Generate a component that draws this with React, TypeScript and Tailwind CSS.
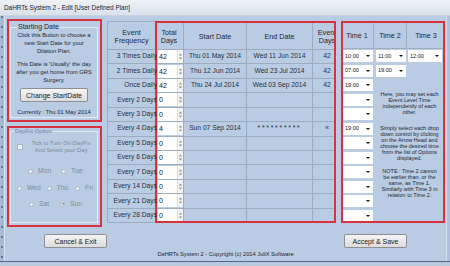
import React from 'react';

type Row = { freq: string; days: string; start?: string; end?: string; ev?: string };

const rows: Row[] = [
  { freq: '3 Times Daily', days: '42', start: 'Thu 01 May 2014', end: 'Wed 11 Jun 2014', ev: '42' },
  { freq: '2 Times Daily', days: '42', start: 'Thu 12 Jun 2014', end: 'Wed 23 Jul 2014', ev: '42' },
  { freq: 'Once Daily', days: '42', start: 'Thu 24 Jul 2014', end: 'Wed 03 Sep 2014', ev: '42' },
  { freq: 'Every 2 Days', days: '0' },
  { freq: 'Every 3 Days', days: '0' },
  { freq: 'Every 4 Days', days: '4', start: 'Sun 07 Sep 2014', end: '**********', ev: '«' },
  { freq: 'Every 5 Days', days: '0' },
  { freq: 'Every 6 Days', days: '0' },
  { freq: 'Every 7 Days', days: '0' },
  { freq: 'Every 14 Days', days: '0' },
  { freq: 'Every 21 Days', days: '0' },
  { freq: 'Every 28 Days', days: '0' },
];

const time1 = ['10:00', '07:00', '19:00', '', '', '19:00', '', '', '', '', '', ''];

function SpinBox({ value }: { value: string }) {
  return (
    <div className="flex h-[13px] w-[25px] items-center bg-white">
      <span className="flex-1 pl-[1px] text-[7px] leading-none text-[#111]">{value}</span>
      <div className="flex h-full w-[6px] items-center justify-center border-l border-[#d6dade] bg-[#f4f4f4]">
        <svg width="5" height="9" viewBox="0 0 5 9">
          <path d="M2.5 1.5L4 3.5H1z" fill="#8a8a8a" />
          <path d="M1 5.5h3L2.5 7.5z" fill="#8a8a8a" />
        </svg>
      </div>
    </div>
  );
}

function Combo({ value, w }: { value: string; w: string }) {
  return (
    <div className={`flex h-[12px] items-center justify-between bg-white pl-[2px] pr-[3px] ${w}`}>
      <span className="text-[5.5px] leading-none text-[#111]">{value}</span>
      <svg width="4" height="2" viewBox="0 0 4 2">
        <path d="M0 0h4L2 2z" fill="#111" />
      </svg>
    </div>
  );
}

function Radio({ label, w, selected }: { label: string; w: string; selected?: boolean }) {
  return (
    <div className={`flex items-center gap-[5px] ${w}`}>
      <span className="flex h-[5px] w-[5px] shrink-0 items-center justify-center rounded-full border border-[#a9b5c4] bg-[#eef2f6]">
        {selected && <span className="h-[2px] w-[2px] rounded-full bg-[#8794a6]" />}
      </span>
      <span className="text-[6.8px] leading-[8px] text-[#7e8c9e]">{label}</span>
    </div>
  );
}

export default function App() {
  return (
    <div className="flex h-[266px] w-[450px] flex-col overflow-hidden bg-[#b4c6dd] font-['Liberation_Sans',Arial,sans-serif] text-[#1d2633]">
      {/* title bar */}
      <div className="flex h-[16px] items-center border-b border-[#c9d3de] bg-linear-to-b from-[#eef2f6] to-[#d9e1ea] pl-[4px] text-[6.4px] text-[#1b2230]">
        DaHRTs System 2 - Edit [User Defined Plan]
      </div>

      <div className="flex h-[245px]">
        <div className="flex w-[5px] justify-center border-r border-[#dce5ef] bg-[#a8bbd4]">
          <div className="w-[2px] bg-[repeating-linear-gradient(to_bottom,#5f7699_0px,#5f7699_2px,transparent_2px,transparent_10px)]" />
        </div>

        <div className="flex w-[441px] flex-col bg-[#bacce3] pt-[3px]">
          <div className="flex items-start">
            {/* left column */}
            <div className="ml-[2px] flex w-[95px] flex-col gap-[4px]">
              <div className="flex h-[103px] flex-col border-2 border-[#d8323f] pb-[2px]">
                <fieldset className="ml-[1px] mt-[2px] w-[88px] flex-1 border border-[#e3eaf3]">
                  <legend className="ml-[6px] px-[1px] text-[7px] leading-[8px] text-[#1d2633]">Starting Date</legend>
                  <div className="flex flex-col items-center text-center text-[5.8px] leading-[8px]">
                    <p>
                      Click this Button to choose a<br />new Start Date for your<br />Dilation Plan.
                    </p>
                    <p className="mt-[5px]">
                      This Date is 'Usually' the day<br />after you get home from GRS<br />Surgery.
                    </p>
                    <button className="mt-[4px] h-[14px] w-[68px] rounded-[2px] border border-[#8c8f93] bg-linear-to-b from-[#f5f5f5] to-[#dcdcdc] text-[7px] leading-none text-[#1a1a1a]">
                      Change StartDate
                    </button>
                    <p className="mt-[6px]">Currently : Thu 01 May 2014</p>
                  </div>
                </fieldset>
              </div>

              <div className="flex h-[101px] flex-col border-2 border-[#d8323f] pb-[2px]">
                <fieldset className="ml-[1px] w-[88px] flex-1 border border-[#e3eaf3]">
                  <legend className="ml-[3px] px-[1px] text-[5.8px] leading-[7px] text-[#7a889a]">DayFix Option</legend>
                  <div className="mt-[5px] flex h-[14px] items-center">
                    <span className="ml-[6px] h-[6px] w-[6px] border border-[#aab5c3] bg-[#eef2f6]" />
                    <span className="ml-[8px] w-[60px] text-center text-[5.8px] leading-[7px] text-[#7a889a]">
                      Tick to Turn On DayFix<br />And Select your Day
                    </span>
                  </div>
                  <div className="ml-[17px] mt-[13px] flex h-[8px]">
                    <Radio label="Mon" w="w-[33px]" />
                    <Radio label="Tue" w="w-[24px]" />
                  </div>
                  <div className="ml-[6px] mt-[9px] flex h-[8px]">
                    <Radio label="Wed" w="w-[29.5px]" />
                    <Radio label="Thu" w="w-[28.5px]" />
                    <Radio label="Fri" w="w-[18px]" />
                  </div>
                  <div className="ml-[18px] mt-[8px] flex h-[8px]">
                    <Radio label="Sat" w="w-[31px]" />
                    <Radio label="Sun" w="w-[24px]" selected />
                  </div>
                </fieldset>
              </div>
            </div>

            {/* data grid */}
            <div className="ml-[5px] mt-[2px] flex">
              <div className="grid h-[202px] w-[48px] grid-rows-[28px_repeat(12,minmax(0,1fr))] border-l border-t border-[#9dadc1]">
                <div className="flex items-center justify-center border-b border-[#9dadc1] pt-[3px] text-center text-[7.2px] leading-[8.5px]">
                  Event<br />Frequency
                </div>
                {rows.map((r) => (
                  <div key={r.freq} className="flex items-center justify-end whitespace-nowrap border-b border-[#9dadc1] text-[6.7px] leading-none text-[#263040]">
                    <span className="translate-x-[2px]">{r.freq}</span>
                  </div>
                ))}
              </div>

              <div className="grid h-[202px] w-[181px] grid-cols-[29px_63px_66px_23px] grid-rows-[28px_repeat(12,minmax(0,1fr))] border-t border-[#9dadc1] outline-2 -outline-offset-2 outline-[#d8323f]">
                <div className="flex items-center justify-center border-b border-r border-[#9dadc1] pt-[3px] text-center text-[7.2px] leading-[8.5px]">
                  Total<br />Days
                </div>
                <div className="flex items-center justify-center border-b border-r border-[#9dadc1] pt-[3px] text-[7.2px]">Start Date</div>
                <div className="flex items-center justify-center border-b border-r border-[#9dadc1] pt-[3px] text-[7.2px]">End Date</div>
                <div className="flex items-center overflow-hidden border-b border-[#9dadc1] pt-[3px]">
                  <div className="w-[28px] shrink-0 text-center text-[7.2px] leading-[8.5px]">
                    Event<br />Days
                  </div>
                </div>
                {rows.map((r) => (
                  <React.Fragment key={r.freq}>
                    <div className="flex items-center border-b border-r border-[#9dadc1] bg-[#bacce3] pl-[3px]">
                      <SpinBox value={r.days} />
                    </div>
                    <div className="flex items-center justify-center border-b border-r border-[#9dadc1] text-[6.7px] leading-none text-[#263040]">
                      {r.start}
                    </div>
                    <div className="flex items-center justify-center border-b border-r border-[#9dadc1] text-[6.7px] leading-none tracking-[0.6px] text-[#263040]">
                      {r.end === '**********' ? <span className="tracking-[1.8px]">{r.end}</span> : <span className="tracking-normal">{r.end}</span>}
                    </div>
                    <div className="flex items-center overflow-hidden border-b border-[#9dadc1]">
                      <div className="w-[28px] shrink-0 text-center text-[6.7px] leading-none text-[#263040]">{r.ev}</div>
                    </div>
                  </React.Fragment>
                ))}
              </div>
            </div>

            {/* time panel */}
            <div className="ml-[5px] mt-[2px] flex h-[202px] w-[104px] flex-col outline-2 -outline-offset-2 outline-[#d8323f]">
              <div className="flex h-[28px] border-b border-t border-[#9dadc1]">
                <div className="flex w-[33px] items-center justify-center border-r border-[#9dadc1] pt-[3px] text-[7.2px]">Time 1</div>
                <div className="flex w-[33px] items-center justify-center border-r border-[#9dadc1] pt-[3px] text-[7.2px]">Time 2</div>
                <div className="flex w-[38px] items-center justify-center pt-[3px] text-[7.2px]">Time 3</div>
              </div>
              <div className="flex flex-1">
                <div className="flex w-[33px] flex-col">
                  {time1.map((t, i) => (
                    <div key={i} className="flex h-[14.5px] items-center pl-[2px]">
                      <Combo value={t} w="w-[30px]" />
                    </div>
                  ))}
                </div>
                <div className="flex w-[71px] flex-col">
                  <div className="flex h-[14.5px] items-center">
                    <div className="w-[33px] pl-[2px]">
                      <Combo value="11:00" w="w-[30px]" />
                    </div>
                    <div className="pl-[1px]">
                      <Combo value="12:00" w="w-[34px]" />
                    </div>
                  </div>
                  <div className="flex h-[14.5px] items-center pl-[2px]">
                    <Combo value="19:00" w="w-[30px]" />
                  </div>
                  <div className="pt-[13px] text-center text-[5.5px] leading-[6px] text-[#1d2633]">
                    <p>
                      Here, you may set each<br />Event Level Time<br />independently of each<br />other.
                    </p>
                    <p className="mt-[10px]">
                      Simply select each drop<br />down control by clicking<br />on the Arrow Head and<br />choose the desired time<br />from the list of Options<br />displayed.
                    </p>
                    <p className="mt-[7px]">
                      NOTE : Time 2 cannot<br />be earlier than, or the<br />same, as Time 1.<br />Similarly with Time 3 in<br />relation to Time 2.
                    </p>
                  </div>
                </div>
              </div>
            </div>
          </div>

          {/* buttons */}
          <div className="mt-[7px] flex h-[14px] px-[39px]">
            <button className="h-[14px] w-[63px] rounded-[2px] border border-[#8c8f93] bg-linear-to-b from-[#f5f5f5] to-[#dcdcdc] text-[7px] leading-none text-[#1a1a1a]">
              Cancel &amp; Exit
            </button>
            <button className="ml-auto h-[14px] w-[63px] rounded-[2px] border border-[#8c8f93] bg-linear-to-b from-[#f5f5f5] to-[#dcdcdc] text-[7px] leading-none text-[#1a1a1a]">
              Accept &amp; Save
            </button>
          </div>

          <div className="flex h-[13px] items-center justify-center text-[5.7px] text-[#1d2633]">
            DaHRTs System 2 - Copyright (c) 2014 JuliX Software
          </div>
        </div>

        <div className="w-[4px] border-l border-[#d4dfeb] bg-[#aec1d9]" />
      </div>

      <div className="h-[5px] border-t border-[#4e6688] bg-[#b8c9de]" />
    </div>
  );
}
